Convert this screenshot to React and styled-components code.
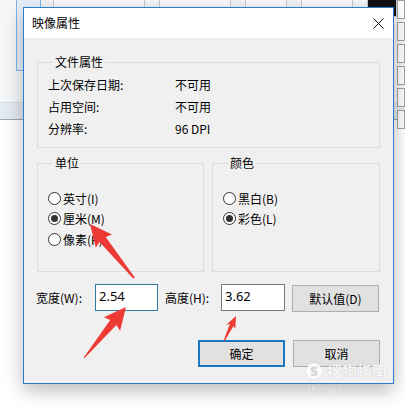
import React from 'react'
import styled, { createGlobalStyle } from 'styled-components'

const GlobalStyle = createGlobalStyle`
  html, body {
    margin: 0;
    padding: 0;
    background: #ffffff;
  }
  body {
    font-family: "Noto Sans CJK SC", "Noto Sans", sans-serif;
    font-size: 12px;
    color: #000;
  }
`

const ARROWS = [
  { tail: [134, 278], tip: [90, 224], head: 20, headW: 21, shaft: 8, tailW: 2 },
  { tail: [84, 358], tip: [126, 307], head: 20, headW: 21, shaft: 8, tailW: 1 },
  { tail: [224, 341], tip: [236, 316], head: 10, headW: 10, shaft: 4, tailW: 1 },
]

const arrowPoints = ({ tail, tip, head, headW, shaft, tailW }) => {
  const [tx, ty] = tail
  const [px, py] = tip
  const len = Math.hypot(px - tx, py - ty)
  const ux = (px - tx) / len
  const uy = (py - ty) / len
  const nx = -uy
  const ny = ux
  const bx = px - ux * head
  const by = py - uy * head
  const pts = [
    [tx + (nx * tailW) / 2, ty + (ny * tailW) / 2],
    [bx + (nx * shaft) / 2, by + (ny * shaft) / 2],
    [bx + (nx * headW) / 2 - ux * 2, by + (ny * headW) / 2 - uy * 2],
    [px, py],
    [bx - (nx * headW) / 2 - ux * 2, by - (ny * headW) / 2 - uy * 2],
    [bx - (nx * shaft) / 2, by - (ny * shaft) / 2],
    [tx - (nx * tailW) / 2, ty - (ny * tailW) / 2],
  ]
  return pts.map((p) => p.map((v) => v.toFixed(1)).join(',')).join(' ')
}

const App = () => {
  return (
    <Desktop>
      <GlobalStyle />
      <Ribbon>
        <SidePanel />
        <ToolStrip>
          <Tool $w={90} />
          <Tool $w={70} />
          <Tool $w={40} />
          <Tool $w={50} />
          <Tool $w={28} $dark />
        </ToolStrip>
        <Palette>
          {Array.from({ length: 6 }).map((_, i) => (
            <Swatch key={i} />
          ))}
        </Palette>
      </Ribbon>
      <Ruler />

      <Window>
        <TitleBar>
          <span>映像属性</span>
          <CloseButton>
            <svg width="11" height="11" viewBox="0 0 11 11">
              <path d="M0.5 0.5 L10.5 10.5 M10.5 0.5 L0.5 10.5" stroke="#111" strokeWidth="1" />
            </svg>
          </CloseButton>
        </TitleBar>

        <Body>
          <Group>
            <Legend>文件属性</Legend>
            <InfoRow>
              <InfoLabel>上次保存日期:</InfoLabel>
              <span>不可用</span>
            </InfoRow>
            <InfoRow>
              <InfoLabel>占用空间:</InfoLabel>
              <span>不可用</span>
            </InfoRow>
            <InfoRow>
              <InfoLabel>分辨率:</InfoLabel>
              <span>96 DPI</span>
            </InfoRow>
          </Group>

          <Pair>
            <Group $radios>
              <Legend>单位</Legend>
              <Radio label="英寸(I)" />
              <Radio label="厘米(M)" checked />
              <Radio label="像素(P)" />
            </Group>
            <Group $radios>
              <Legend>颜色</Legend>
              <Radio label="黑白(B)" />
              <Radio label="彩色(L)" checked />
            </Group>
          </Pair>

          <SizeRow>
            <FieldLabel $w={59}>宽度(W):</FieldLabel>
            <Field $focused $w={63}>2.54</Field>
            <FieldLabel $w={56} $gap={7}>高度(H):</FieldLabel>
            <Field $w={64}>3.62</Field>
            <Button $gap={7} $top={1}>默认值(D)</Button>
          </SizeRow>

          <ActionRow>
            <Button $primary>确定</Button>
            <Button $gap={8}>取消</Button>
          </ActionRow>
        </Body>
      </Window>

      <Watermark>
        <Brand>
          <Logo>S</Logo>
          搜狗指南
        </Brand>
        <Site>zhinan.sogou.com</Site>
      </Watermark>

      <Marks viewBox="0 0 405 417">
        {ARROWS.map((a, i) => (
          <polygon key={i} points={arrowPoints(a)} fill="#ee3a35" />
        ))}
      </Marks>
    </Desktop>
  )
}

const Radio = ({ label, checked }) => (
  <RadioRow>
    <RadioDot $checked={checked} />
    <span>{label}</span>
  </RadioRow>
)

const Desktop = styled.div`
  position: relative;
  width: 405px;
  height: 417px;
  overflow: hidden;
  background: #ffffff;
`

const Ribbon = styled.div`
  height: 102px;
  display: flex;
  align-items: flex-start;
  background: #f5f6f7;
  border-bottom: 1px solid #dadbdc;
`

const SidePanel = styled.div`
  margin-left: 16px;
  width: 40px;
  height: 70px;
  border: 1px solid #7eb4ea;
  border-top: none;
  background: #e8f1fb;
`

const ToolStrip = styled.div`
  flex: 1;
  display: flex;
  gap: 14px;
  padding-left: 12px;
`

const Tool = styled.div`
  width: ${(p) => p.$w}px;
  height: 16px;
  border: 1px solid #c9c9c9;
  border-top: none;
  background: ${(p) => (p.$dark ? '#111' : '#fbfbfb')};
`

const Palette = styled.div`
  width: 14px;
  display: grid;
  grid-template-columns: 1fr;
  gap: 3px;
`

const Swatch = styled.div`
  height: 17px;
  border: 1px solid #a0a0a0;
  background: #fff;
`

const Ruler = styled.div`
  height: 16px;
  background: #e4eaf1;
  border-bottom: 1px solid #9aa7b5;
`

const Window = styled.div`
  position: absolute;
  left: 23px;
  top: 7px;
  width: 371px;
  box-sizing: border-box;
  border: 1px solid #2b7bd3;
  background: #f0f0f0;
  box-shadow: 0 6px 18px rgba(0, 0, 0, 0.28);
`

const TitleBar = styled.div`
  height: 30px;
  display: flex;
  align-items: center;
  justify-content: space-between;
  padding-left: 8px;
  background: #ffffff;
  line-height: 16px;
`

const CloseButton = styled.div`
  width: 30px;
  height: 30px;
  display: flex;
  align-items: center;
  justify-content: center;
`

const Body = styled.div`
  padding: 16px 13px 16px 13px;
`

const Group = styled.fieldset`
  margin: 0;
  min-width: 0;
  padding: ${(p) => (p.$radios ? '17px 0 21px 10px' : '3px 0 8px 10px')};
  border: 1px solid #dcdcdc;
`

const Legend = styled.legend`
  margin-left: 5px;
  padding: 0 2px;
  line-height: 16px;
`

const InfoRow = styled.div`
  display: flex;
  height: 22px;
  align-items: center;
`

const InfoLabel = styled.span`
  width: 127px;
`

const Pair = styled.div`
  display: grid;
  grid-template-columns: 167px 168px;
  gap: 8px;
  margin-top: 7px;
`

const RadioRow = styled.div`
  display: flex;
  align-items: center;
  gap: 2px;
  height: 20.5px;
`

const RadioDot = styled.span`
  width: 13px;
  height: 13px;
  box-sizing: border-box;
  border-radius: 50%;
  border: 1px solid #333;
  background: #fff;
  display: flex;
  align-items: center;
  justify-content: center;
  &::after {
    content: '';
    width: 7px;
    height: 7px;
    border-radius: 50%;
    background: #333;
    display: ${(p) => (p.$checked ? 'block' : 'none')};
  }
`

const SizeRow = styled.div`
  display: flex;
  align-items: flex-start;
  margin: 12px 0 0 -1px;
`

const FieldLabel = styled.span`
  width: ${(p) => p.$w}px;
  margin-left: ${(p) => p.$gap || 0}px;
  height: 27px;
  line-height: 27px;
`

const Field = styled.div`
  width: ${(p) => p.$w}px;
  height: 27px;
  box-sizing: border-box;
  padding: 1px 3px 0;
  border: 1px solid ${(p) => (p.$focused ? '#2f7c9e' : '#7a7a7a')};
  background: #fff;
  font-family: "Noto Sans", sans-serif;
  font-size: 13px;
  line-height: 20px;
`

const Button = styled.div`
  width: 87px;
  height: 27px;
  box-sizing: border-box;
  margin-left: ${(p) => p.$gap || 0}px;
  margin-top: ${(p) => p.$top || 0}px;
  display: flex;
  align-items: center;
  justify-content: center;
  background: #e1e1e1;
  border: ${(p) => (p.$primary ? '2px solid #1a78c2' : '1px solid #adadad')};
`

const ActionRow = styled.div`
  display: flex;
  justify-content: flex-end;
  margin-top: 28px;
`

const Watermark = styled.div`
  position: absolute;
  left: 306px;
  top: 362px;
  display: flex;
  flex-direction: column;
  align-items: flex-start;
  color: rgba(255, 255, 255, 0.9);
  text-shadow: 0 0 1px rgba(0, 0, 0, 0.25);
  pointer-events: none;
`

const Brand = styled.div`
  display: flex;
  align-items: center;
  gap: 5px;
  font-size: 15px;
  font-weight: 700;
  line-height: 18px;
`

const Logo = styled.span`
  width: 16px;
  height: 16px;
  border-radius: 50%;
  background: rgba(255, 255, 255, 0.85);
  box-shadow: 0 0 1px rgba(0, 0, 0, 0.3);
  color: #d8d8d8;
  font-size: 12px;
  line-height: 16px;
  text-align: center;
`

const Site = styled.div`
  margin-top: 5px;
  font-family: "Liberation Sans", sans-serif;
  font-size: 10px;
  line-height: 12px;
  color: rgba(255, 255, 255, 0.85);
`

const Marks = styled.svg`
  position: absolute;
  left: 0;
  top: 0;
  width: 405px;
  height: 417px;
  pointer-events: none;
`

export default App
